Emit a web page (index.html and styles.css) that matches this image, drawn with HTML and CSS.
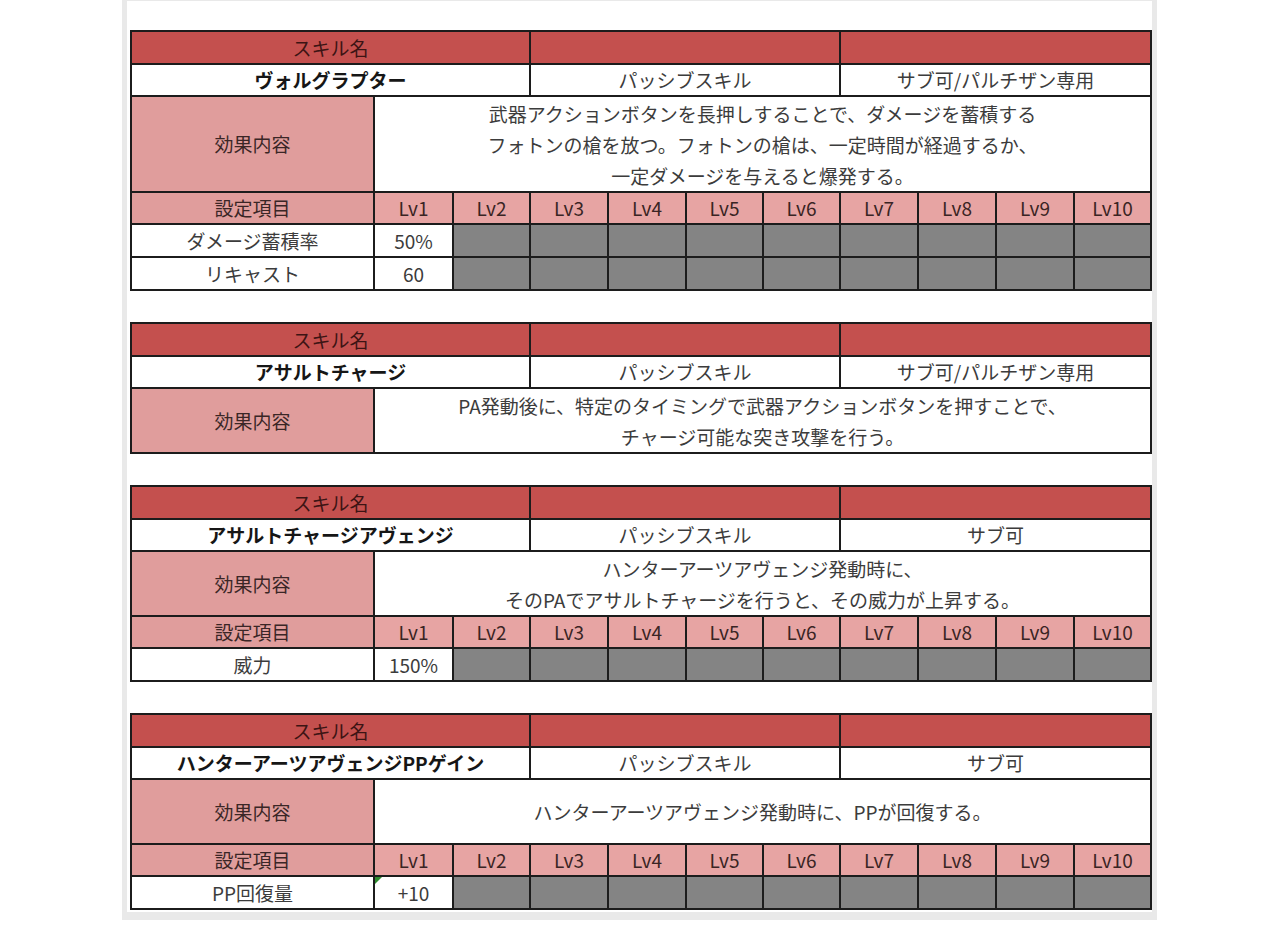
FILE: index.html
```html
<!DOCTYPE html>
<html lang="ja">
<head>
<meta charset="utf-8">
<title>スキル一覧</title>
<link rel="stylesheet" href="styles.css">
</head>
<body>
<div class="frame">
  <div class="inner">

    <table class="skill">
      <colgroup>
        <col class="c-label"><col class="c-lv1"><col class="c77"><col class="c78"><col class="c78"><col class="c77"><col class="c77"><col class="c78"><col class="c78"><col class="c78"><col class="c77">
      </colgroup>
      <tr class="r-head"><td colspan="3" class="head">スキル名</td><td colspan="4" class="head"></td><td colspan="4" class="head"></td></tr>
      <tr class="r-name"><td colspan="3" class="name">ヴォルグラプター</td><td colspan="4" class="plain">パッシブスキル</td><td colspan="4" class="plain">サブ可/パルチザン専用</td></tr>
      <tr class="r-eff3"><td class="label">効果内容</td><td colspan="10" class="effect">武器アクションボタンを長押しすることで、ダメージを蓄積する<br>フォトンの槍を放つ。フォトンの槍は、一定時間が経過するか、<br>一定ダメージを与えると爆発する。</td></tr>
      <tr class="r-lv"><td class="label">設定項目</td><td class="lv">Lv1</td><td class="lv">Lv2</td><td class="lv">Lv3</td><td class="lv">Lv4</td><td class="lv">Lv5</td><td class="lv">Lv6</td><td class="lv">Lv7</td><td class="lv">Lv8</td><td class="lv">Lv9</td><td class="lv">Lv10</td></tr>
      <tr class="r-data"><td class="plain">ダメージ蓄積率</td><td class="plain">50%</td><td class="na"></td><td class="na"></td><td class="na"></td><td class="na"></td><td class="na"></td><td class="na"></td><td class="na"></td><td class="na"></td><td class="na"></td></tr>
      <tr class="r-data"><td class="plain">リキャスト</td><td class="plain">60</td><td class="na"></td><td class="na"></td><td class="na"></td><td class="na"></td><td class="na"></td><td class="na"></td><td class="na"></td><td class="na"></td><td class="na"></td></tr>
    </table>

    <table class="skill">
      <colgroup>
        <col class="c-label"><col class="c-lv1"><col class="c77"><col class="c78"><col class="c78"><col class="c77"><col class="c77"><col class="c78"><col class="c78"><col class="c78"><col class="c77">
      </colgroup>
      <tr class="r-head"><td colspan="3" class="head">スキル名</td><td colspan="4" class="head"></td><td colspan="4" class="head"></td></tr>
      <tr class="r-name"><td colspan="3" class="name">アサルトチャージ</td><td colspan="4" class="plain">パッシブスキル</td><td colspan="4" class="plain">サブ可/パルチザン専用</td></tr>
      <tr class="r-eff2"><td class="label">効果内容</td><td colspan="10" class="effect">PA発動後に、特定のタイミングで武器アクションボタンを押すことで、<br>チャージ可能な突き攻撃を行う。</td></tr>
    </table>

    <table class="skill">
      <colgroup>
        <col class="c-label"><col class="c-lv1"><col class="c77"><col class="c78"><col class="c78"><col class="c77"><col class="c77"><col class="c78"><col class="c78"><col class="c78"><col class="c77">
      </colgroup>
      <tr class="r-head"><td colspan="3" class="head">スキル名</td><td colspan="4" class="head"></td><td colspan="4" class="head"></td></tr>
      <tr class="r-name"><td colspan="3" class="name">アサルトチャージアヴェンジ</td><td colspan="4" class="plain">パッシブスキル</td><td colspan="4" class="plain">サブ可</td></tr>
      <tr class="r-eff2"><td class="label">効果内容</td><td colspan="10" class="effect">ハンターアーツアヴェンジ発動時に、<br>そのPAでアサルトチャージを行うと、その威力が上昇する。</td></tr>
      <tr class="r-lv"><td class="label">設定項目</td><td class="lv">Lv1</td><td class="lv">Lv2</td><td class="lv">Lv3</td><td class="lv">Lv4</td><td class="lv">Lv5</td><td class="lv">Lv6</td><td class="lv">Lv7</td><td class="lv">Lv8</td><td class="lv">Lv9</td><td class="lv">Lv10</td></tr>
      <tr class="r-data"><td class="plain">威力</td><td class="plain">150%</td><td class="na"></td><td class="na"></td><td class="na"></td><td class="na"></td><td class="na"></td><td class="na"></td><td class="na"></td><td class="na"></td><td class="na"></td></tr>
    </table>

    <table class="skill">
      <colgroup>
        <col class="c-label"><col class="c-lv1"><col class="c77"><col class="c78"><col class="c78"><col class="c77"><col class="c77"><col class="c78"><col class="c78"><col class="c78"><col class="c77">
      </colgroup>
      <tr class="r-head"><td colspan="3" class="head">スキル名</td><td colspan="4" class="head"></td><td colspan="4" class="head"></td></tr>
      <tr class="r-name"><td colspan="3" class="name">ハンターアーツアヴェンジPPゲイン</td><td colspan="4" class="plain">パッシブスキル</td><td colspan="4" class="plain">サブ可</td></tr>
      <tr class="r-eff2"><td class="label">効果内容</td><td colspan="10" class="effect">ハンターアーツアヴェンジ発動時に、PPが回復する。</td></tr>
      <tr class="r-lv"><td class="label">設定項目</td><td class="lv">Lv1</td><td class="lv">Lv2</td><td class="lv">Lv3</td><td class="lv">Lv4</td><td class="lv">Lv5</td><td class="lv">Lv6</td><td class="lv">Lv7</td><td class="lv">Lv8</td><td class="lv">Lv9</td><td class="lv">Lv10</td></tr>
      <tr class="r-data"><td class="plain">PP回復量</td><td class="plain note">+10</td><td class="na"></td><td class="na"></td><td class="na"></td><td class="na"></td><td class="na"></td><td class="na"></td><td class="na"></td><td class="na"></td><td class="na"></td></tr>
    </table>

  </div>
</div>
</body>
</html>
```
FILE: styles.css
```css
html, body {
  margin: 0;
  padding: 0;
  background: #ffffff;
}

body {
  font-family: "Noto Sans CJK JP", "Noto Sans", sans-serif;
  color: #333333;
}

.frame {
  margin-left: 122px;
  width: 1035px;
  box-sizing: border-box;
  background: #e9e9e9;
  padding: 1px 5px 8px 5px;
}

.inner {
  background: #ffffff;
  padding: 29px 2px 2px 3px;
  display: flex;
  flex-direction: column;
  gap: 31px;
}

.skill {
  width: 1020px;
  table-layout: fixed;
  border-collapse: collapse;
  border: 2px solid #151515;
  font-size: 19px;
}

.c-label { width: 243px; }
.c-lv1 { width: 79px; }
.c77 { width: 77px; }
.c78 { width: 78px; }

.skill td {
  border: 2px solid #1c1c1c;
  padding: 0;
  text-align: center;
  vertical-align: middle;
  line-height: 24px;
  white-space: nowrap;
}

.r-head { height: 33px; }
.r-name { height: 32px; }
.r-eff3 { height: 96px; }
.r-eff2 { height: 65px; }
.r-lv { height: 32px; }
.r-data { height: 33px; }

.head {
  background: #c4504e;
  color: #3c1414;
}

.name {
  background: #ffffff;
  color: #161616;
  font-weight: bold;
}

.plain {
  background: #ffffff;
  color: #3c3c3c;
}

.label {
  background: #e09d9c;
  color: #3a2626;
}

.lv {
  background: #e7a4a3;
  color: #3a2424;
}

.skill td.effect {
  background: #ffffff;
  color: #3c3c3c;
  line-height: 31px;
}

.na {
  background: #848484;
}

.note {
  position: relative;
}

.note::before {
  content: "";
  position: absolute;
  left: 0;
  top: 0;
  width: 0;
  height: 0;
  border-top: 7px solid #2e8b2e;
  border-right: 7px solid transparent;
}
```
